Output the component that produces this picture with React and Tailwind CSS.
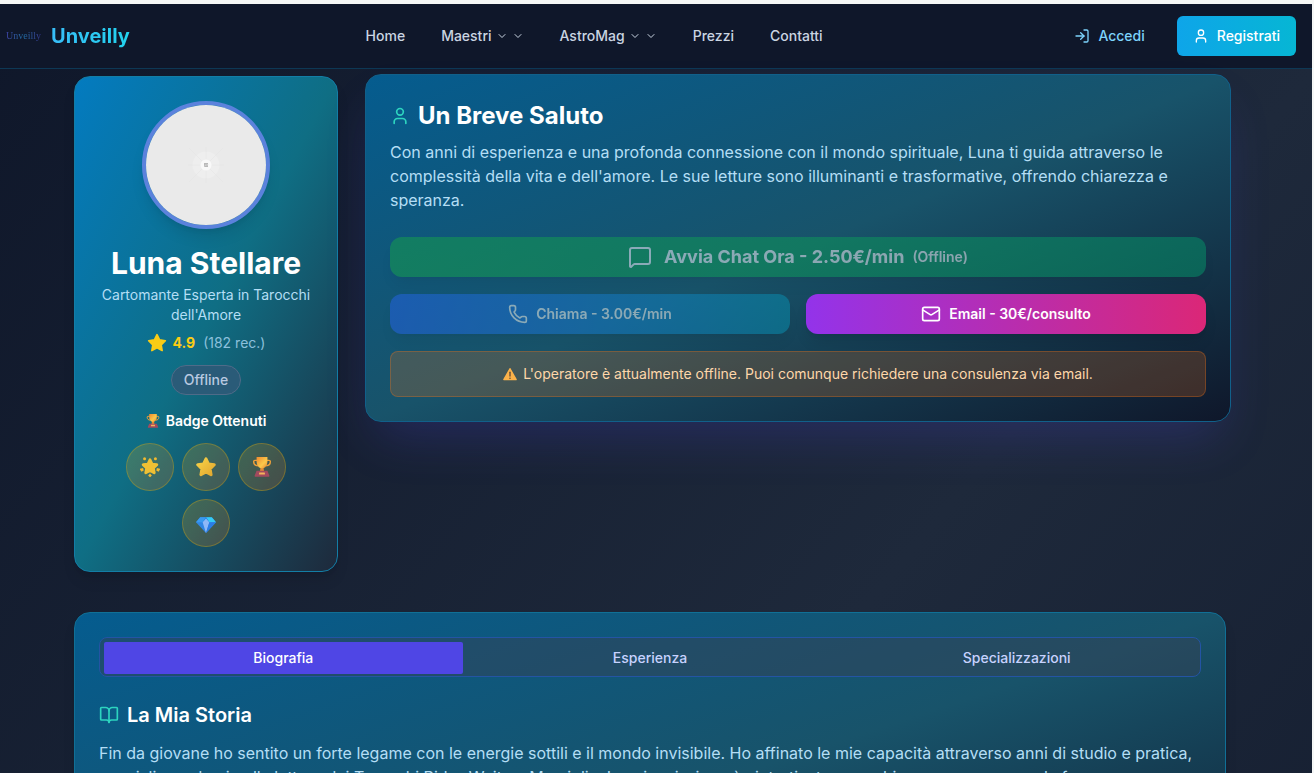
import React, { useState } from "react";
import { BookOpen, ChevronDown, LogIn, Mail, MessageSquare, Phone, User } from "lucide-react";

function StarShape({ className, fill = "#facc15" }) {
  return (
    <svg viewBox="0 0 24 24" className={className} aria-hidden="true">
      <path
        d="M12 2l3.09 6.26L22 9.27l-5 4.87 1.18 6.88L12 17.77l-6.18 3.25L7 14.14 2 9.27l6.91-1.01L12 2z"
        fill={fill}
        stroke={fill}
        strokeWidth="2"
        strokeLinejoin="round"
      />
    </svg>
  );
}

function SoftStar({ className }) {
  return (
    <svg viewBox="0 0 24 24" className={className} aria-hidden="true">
      <defs>
        <linearGradient id="softStar" x1="0" y1="0" x2="1" y2="1">
          <stop offset="0" stopColor="#f7d247" />
          <stop offset="1" stopColor="#e2a82f" />
        </linearGradient>
      </defs>
      <path
        d="M12 2.2l2.9 6.2 7 .9-5 4.9 1.2 7L12 18l-6.1 3.2 1.2-7-5-4.9 7-.9L12 2.2z"
        fill="url(#softStar)"
        stroke="url(#softStar)"
        strokeWidth="3.6"
        strokeLinejoin="round"
      />
    </svg>
  );
}

function GlowingStar({ className }) {
  return (
    <svg viewBox="0 0 24 24" className={className} aria-hidden="true">
      <path
        d="M12 3.4l2.4 5.2 5.8.6-4.2 4 1.1 5.8L12 16.2l-5.1 2.8 1.1-5.8-4.2-4 5.8-.6L12 3.4z"
        fill="#efc034"
        stroke="#efc034"
        strokeWidth="3.4"
        strokeLinejoin="round"
      />
      <g fill="#f0b92f">
        <circle cx="5.500" cy="2.200" r="1.800" />
        <circle cx="18.500" cy="2.200" r="1.800" />
        <path d="M-.4 14.200l4.100-.9.800 2.800-2.800 1.600zM24.400 14.200l-4.100-.9-.8 2.800 2.800 1.600zM12 19.800l2.200 2.300L12 24.500 9.800 22.100z" />
      </g>
    </svg>
  );
}

function Trophy({ className }) {
  return (
    <svg viewBox="0 0 24 24" className={className} aria-hidden="true">
      <defs>
        <linearGradient id="cup" x1="0" y1="0" x2="1" y2="1">
          <stop offset="0" stopColor="#f08a2e" />
          <stop offset="0.6" stopColor="#fbc94b" />
          <stop offset="1" stopColor="#e9832f" />
        </linearGradient>
      </defs>
      <path
        d="M6.500 4H3.500c-1 0-1.500.6-1.500 1.500C2 8.500 4 10.500 7 10.500M17.500 4h3c1 0 1.500.6 1.500 1.500 0 3-2 5-5 5"
        fill="none"
        stroke="#f0a03a"
        strokeWidth="1.700"
      />
      <path d="M10.300 12h3.400l.8 5.500h-5z" fill="#e08a34" />
      <path d="M5.500 0h13v5c0 5-2.500 8.500-6.500 8.500S5.500 10 5.500 5z" fill="url(#cup)" />
      <path d="M5.500 16.500h13l2.300 5.700c.3.800-.1 1.500-1 1.500H4.200c-.9 0-1.300-.7-1-1.500z" fill="#a24a5e" />
      <rect x="8.500" y="18.500" width="7" height="2.500" rx="0.6" fill="#f2b45a" />
    </svg>
  );
}

function Gem({ className }) {
  return (
    <svg viewBox="0 0 24 24" className={className} aria-hidden="true">
      <path d="M5 5h14l5 6-12 13L0 11z" fill="#2f86e4" />
      <path d="M5 5h7l-4 6H0z" fill="#3a9af0" />
      <path d="M12 5h7l5 6h-8z" fill="#35cbf5" />
      <path d="M12 5l4 6H8z" fill="#1f86e6" />
      <path d="M8 11l4-4.500L16 11l-4 13z" fill="#8db8f8" />
      <path d="M16 11h8L12 24z" fill="#2b7de6" />
    </svg>
  );
}

function Warning({ className }) {
  return (
    <svg viewBox="0 0 24 24" className={className} aria-hidden="true">
      <path d="M12 3l10.500 18.500h-21z" fill="#fbb24a" stroke="#fbb24a" strokeWidth="2.500" strokeLinejoin="round" />
      <path d="M12 9v6.500" stroke="#5a4636" strokeWidth="2.200" strokeLinecap="round" />
      <circle cx="12" cy="19.200" r="1.300" fill="#5a4636" />
    </svg>
  );
}

function Portrait() {
  return (
    <svg viewBox="0 0 120 120" className="h-full w-full" role="img" aria-label="Luna Stellare">
      <rect width="120" height="120" fill="#eaeaea" />
      <g stroke="#e6e6e6" strokeWidth="0.8">
        <path d="M60 42v36M42 60h36M43 43l34 34M77 43L43 77" />
      </g>
      <circle cx="60" cy="60" r="13.500" fill="#eeeeee" />
      <g stroke="#e7e7e7" strokeWidth="0.8">
        <path d="M60 46v28M46 60h28M50 50l20 20M70 50L50 70" />
      </g>
      <circle cx="60" cy="60" r="5.500" fill="#f9f9f9" />
      <rect x="58" y="58" width="4" height="4" fill="#b9b9b9" />
      <path d="M58.500 61.500l1.500-2 1 1 1-1.500" stroke="#dddddd" strokeWidth="0.800" fill="none" />
    </svg>
  );
}

const navItems = [
  { label: "Home" },
  { label: "Maestri", menu: true },
  { label: "AstroMag", menu: true },
  { label: "Prezzi" },
  { label: "Contatti" },
];

function Header() {
  return (
    <header className="border-b border-[#0d3855] bg-[#0f172a]">
      <div className="flex h-16 items-center justify-between pr-4 pl-[6px]">
        <a href="#home" className="flex items-center gap-[10px]">
          <span className="bg-linear-to-r from-[#3a3f9e] via-[#1f6fa6] to-[#35358a] bg-clip-text font-['Liberation_Serif',serif] text-[10px] leading-4 text-transparent">
            Unveilly
          </span>
          <span className="bg-linear-to-r/srgb from-[#38bdf8] to-[#22d3ee] bg-clip-text text-xl font-bold text-transparent">
            Unveilly
          </span>
        </a>
        <nav className="flex items-center gap-9 text-sm font-medium text-slate-300">
          {navItems.map((item) => (
            <a key={item.label} href={"#" + item.label.toLowerCase()} className="flex items-center gap-1">
              {item.label}
              {item.menu && <ChevronDown className="size-3" />}
              {item.menu && <ChevronDown className="size-3" />}
            </a>
          ))}
        </nav>
        <div className="flex items-center gap-4 text-sm">
          <a href="#accedi" className="flex h-10 items-center gap-2 px-4 font-medium text-[#7dd3fc]">
            <LogIn className="size-4" />
            Accedi
          </a>
          <a
            href="#registrati"
            className="flex h-10 items-center gap-2 rounded-md bg-linear-to-r/srgb from-[#0ea5e9] to-[#06b6d4] px-4 font-medium text-white"
          >
            <User className="size-4" />
            Registrati
          </a>
        </div>
      </div>
    </header>
  );
}

const badges = [
  { name: "Stella brillante", Icon: GlowingStar },
  { name: "Stella", Icon: SoftStar },
  { name: "Trofeo", Icon: Trophy },
  { name: "Diamante", Icon: Gem },
];

function ProfileCard() {
  return (
    <aside className="mt-[2px] flex flex-col items-center rounded-2xl border border-[#137ea6] bg-linear-to-br/srgb from-[#037bc0] via-[#0f6e84] to-[#1e293b] p-6 text-center shadow-lg">
      <div className="size-32 overflow-hidden rounded-full border-4 border-[#5b82dc] shadow-lg">
        <Portrait />
      </div>
      <h1 className="mt-4 text-3xl font-bold whitespace-nowrap text-white">Luna Stellare</h1>
      <p className="mt-1 text-sm text-[#b4def5]">Cartomante Esperta in Tarocchi dell'Amore</p>
      <p className="mt-2 flex items-center text-sm">
        <StarShape className="mr-[6px] size-5" />
        <span className="font-bold text-[#facc15]">4.9</span>
        <span className="ml-2 text-[#8cc0dc]">(182 rec.)</span>
      </p>
      <span className="mt-3 rounded-full border border-[#4f6b88] bg-[#2a5b78] px-3 py-1 text-sm font-medium text-[#b9c9e0]">
        Offline
      </span>
      <h2 className="mt-4 flex items-center gap-[6px] text-sm font-semibold text-white">
        <Trophy className="size-[14px]" />
        Badge Ottenuti
      </h2>
      <ul className="mt-3 flex flex-wrap justify-center gap-2">
        {badges.map(({ name, Icon }) => (
          <li
            key={name}
            title={name}
            className="flex size-12 items-center justify-center rounded-full border border-[#eab308]/30 bg-linear-to-br/srgb from-[#eab308]/20 to-[#f97316]/20"
          >
            <Icon className="size-5" />
          </li>
        ))}
      </ul>
    </aside>
  );
}

function GreetingCard() {
  return (
    <section className="-mx-[5px] self-start rounded-2xl border border-[#11608a] bg-linear-to-br/srgb from-[#055c8f] via-[#18536a] to-[#0f172a] p-6 shadow-[0_25px_50px_-12px_rgba(79,70,229,0.24)] lg:col-span-3">
      <h2 className="flex items-center gap-2 text-2xl leading-[33px] font-bold text-white">
        <User className="size-5 text-[#2dd4bf]" />
        Un Breve Saluto
      </h2>
      <p className="mt-2 text-base text-[#b4def5]">
        Con anni di esperienza e una profonda connessione con il mondo spirituale, Luna ti guida attraverso le
        complessità della vita e dell'amore. Le sue letture sono illuminanti e trasformative, offrendo chiarezza e
        speranza.
      </p>
      <div className="mt-[25px] grid grid-cols-2 gap-x-4 gap-y-[17px] text-sm font-semibold text-white">
        <button
          type="button"
          disabled
          className="col-span-2 flex h-10 items-center justify-center rounded-xl bg-linear-to-r/srgb from-[#16a34a] to-[#059669] opacity-50 shadow-lg"
        >
          <MessageSquare className="mr-3 size-6" />
          <span className="text-lg font-bold">Avvia Chat Ora - 2.50€/min</span>
          <span className="ml-2">(Offline)</span>
        </button>
        <button
          type="button"
          disabled
          className="flex h-10 items-center justify-center gap-2 rounded-xl bg-linear-to-r/srgb from-[#2563eb] to-[#0891b2] opacity-50 shadow-lg"
        >
          <Phone className="size-5" />
          Chiama - 3.00€/min
        </button>
        <button
          type="button"
          className="flex h-10 items-center justify-center gap-2 rounded-xl bg-linear-to-r/srgb from-[#9333ea] to-[#db2777] shadow-lg"
        >
          <Mail className="size-5" />
          Email - 30€/consulto
        </button>
      </div>
      <p className="mt-[17px] flex items-center justify-center gap-[6px] rounded-lg border border-[#f97316]/30 bg-[#f97316]/20 p-3 text-sm text-[#fed7aa]">
        <Warning className="size-[14px]" />
        L'operatore è attualmente offline. Puoi comunque richiedere una consulenza via email.
      </p>
    </section>
  );
}

const tabs = ["Biografia", "Esperienza", "Specializzazioni"];

function Details() {
  const [active, setActive] = useState("Biografia");
  return (
    <section className="mt-10 min-h-96 rounded-2xl border border-[#107096] bg-linear-to-br/srgb from-[#055c8f] via-[#18536a] to-[#0f172a] p-6 shadow-lg">
      <div
        role="tablist"
        className="grid h-10 grid-cols-3 items-start gap-2 rounded-lg border border-[#2454a4] bg-[#334155]/50 p-1 text-sm font-medium"
      >
        {tabs.map((tab) => (
          <button
            key={tab}
            type="button"
            role="tab"
            aria-selected={active === tab}
            onClick={() => setActive(tab)}
            className={active === tab ? "h-8 rounded-xs bg-[#4f46e5] text-white" : "h-8 rounded-xs text-[#c7d2fe]"}
          >
            {tab}
          </button>
        ))}
      </div>
      <h2 className="mt-6 flex items-center gap-2 text-xl font-semibold text-white">
        <BookOpen className="size-5 text-[#2dd4bf]" />
        La Mia Storia
      </h2>
      <p className="mt-3 text-base text-[#b4def5]">
        Fin da giovane ho sentito un forte legame con le energie sottili e il mondo invisibile. Ho affinato le mie
        capacità attraverso anni di studio e pratica, specializzandomi nella lettura dei Tarocchi Rider-Waite e
        Marsiglia. La mia missione è aiutarti a trovare chiarezza, speranza e la forza per abbracciare il
        cammino della tua vita. Ogni lettura è un incontro sincero, in cui le carte diventano uno specchio delle tue
        emozioni e una guida per le scelte che ti attendono.
      </p>
    </section>
  );
}

export default function App() {
  return (
    <div className="h-screen overflow-hidden border-t-4 border-r-2 border-[#f5f7f6] bg-[linear-gradient(130deg,#0f172a_0px,#1e293b_1050px,#0f172a_2100px)] font-[Inter,sans-serif]">
      <Header />
      <main className="mr-auto ml-[max(0px,calc(50%-582px))] max-w-6xl pt-[5px] pb-16">
        <div className="grid grid-cols-1 gap-8 lg:grid-cols-4">
          <ProfileCard />
          <GreetingCard />
        </div>
        <Details />
      </main>
    </div>
  );
}
